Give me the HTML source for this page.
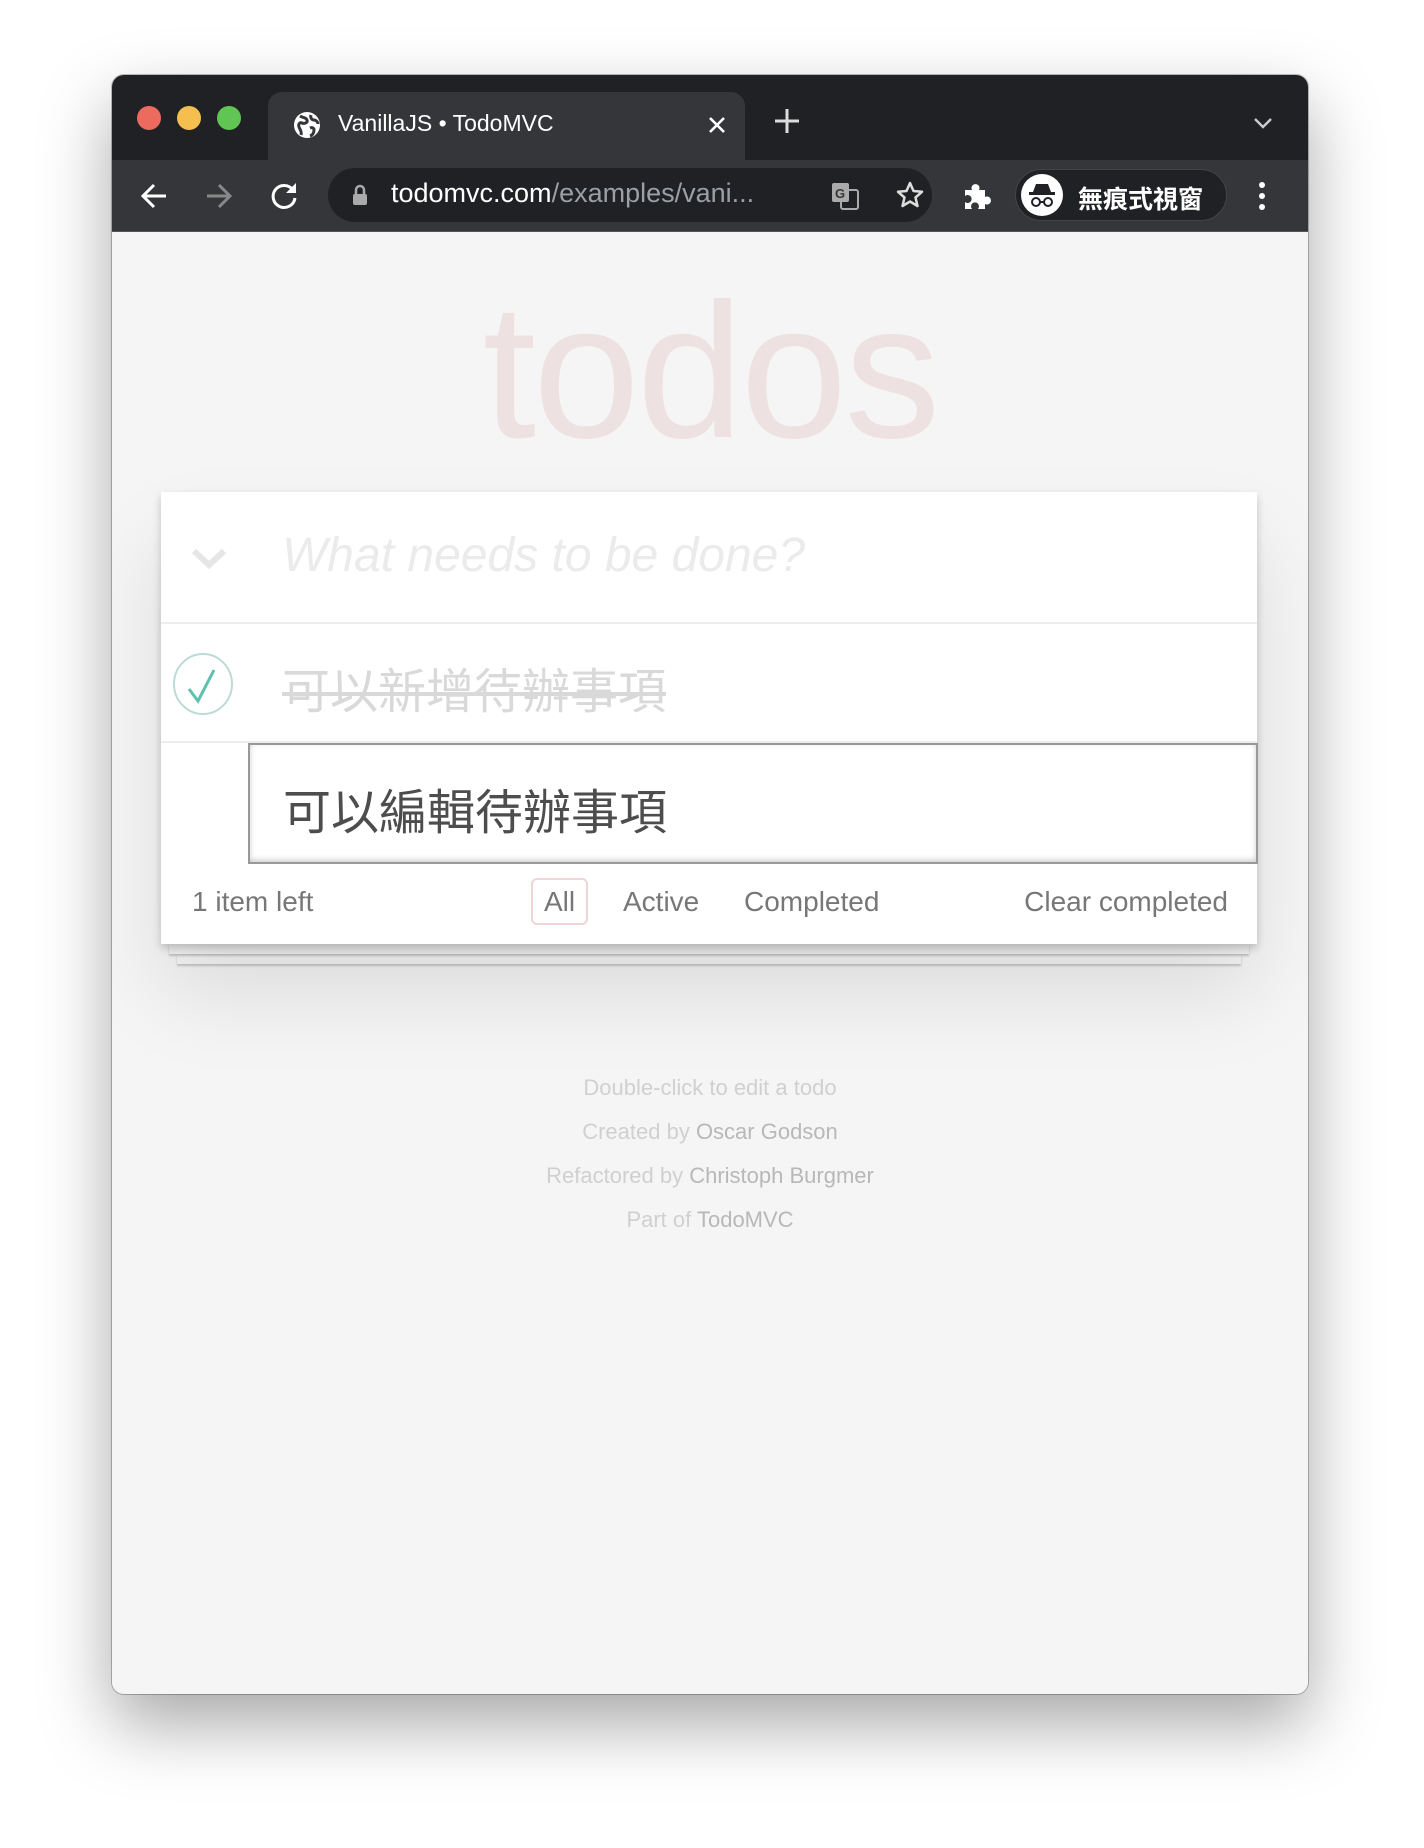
<!DOCTYPE html>
<html><head><meta charset="utf-8">
<style>
*{margin:0;padding:0;box-sizing:border-box}
body{width:1424px;height:1848px;background:#fff;font-family:"Liberation Sans","Noto Sans CJK TC",sans-serif;position:relative;overflow:hidden}
.win{position:absolute;left:112px;top:75px;width:1196px;height:1619px;border-radius:12px;overflow:hidden;background:#f5f5f5;box-shadow:0 30px 70px rgba(0,0,0,.35),0 0 0 1px rgba(0,0,0,.25)}
.tabbar{position:absolute;left:0;top:0;width:100%;height:85px;background:#202124}
.dot{position:absolute;top:31px;width:24px;height:24px;border-radius:50%}
.tab{position:absolute;left:156px;top:17px;width:477px;height:70px;background:#35363a;border-radius:14px 14px 0 0}
.toolbar{position:absolute;left:0;top:85px;width:100%;height:72px;background:#35363a;border-bottom:1px solid #555}
.omni{position:absolute;left:216px;top:8px;width:604px;height:54px;border-radius:27px;background:#202124}
.pill{position:absolute;left:903px;top:9px;width:212px;height:52px;border-radius:26px;background:#202124;border:1px solid #444}
.white{color:#fff}
svg{position:absolute}
.content{position:absolute;left:0;top:158px;width:100%;bottom:0;background:#f5f5f5}
h1{position:absolute;left:0;width:100%;top:38px;text-align:center;font-size:192px;font-weight:normal;color:rgba(175,47,47,.1);letter-spacing:-3px;line-height:200px}
.card{position:absolute;left:49px;top:259px;width:1096px;height:452px;background:#fff;box-shadow:0 4px 8px rgba(0,0,0,.2),0 50px 80px rgba(0,0,0,.1)}
.l1{position:absolute;left:57px;top:711px;width:1080px;height:10px;background:#f6f6f6;box-shadow:0 2px 2px rgba(0,0,0,.2)}
.l2{position:absolute;left:65px;top:721px;width:1064px;height:10px;background:#f6f6f6;box-shadow:0 2px 2px rgba(0,0,0,.2)}
.row{position:absolute;left:0;width:100%}
.info{position:absolute;left:0;width:100%;text-align:center;font-size:22px;color:#d0d0d0}
.info b{font-weight:normal;color:#b8b8b8}
</style></head><body>
<div class="win">
 <div class="tabbar">
  <div class="dot" style="left:25px;background:#ed6a5e"></div>
  <div class="dot" style="left:65px;background:#f5bf4f"></div>
  <div class="dot" style="left:105px;background:#61c554"></div>
  <div class="tab">
   <svg style="left:24px;top:18px" width="30" height="30" viewBox="0 0 30 30"><circle cx="15" cy="15" r="13" fill="#fff"/><path d="M8 6c3 2 6 1 7 4s-3 4-5 3-4 1-3 4 3 4 2 8M19 5c-1 3 1 5 3 5s4 2 4 4M18 18c2-1 4 0 4 2s-1 5-4 6" stroke="#35363a" stroke-width="3" fill="none"/></svg>
   <div class="white" style="position:absolute;left:70px;top:18px;font-size:23px">VanillaJS • TodoMVC</div>
   <svg style="left:440px;top:24px" width="18" height="18" viewBox="0 0 18 18"><path d="M2 2L16 16M16 2L2 16" stroke="#fff" stroke-width="2.6"/></svg>
  </div>
  <svg style="left:662px;top:33px" width="26" height="26" viewBox="0 0 26 26"><path d="M13 1V25M1 13H25" stroke="#ddd" stroke-width="3"/></svg>
  <svg style="left:1141px;top:42px" width="20" height="12" viewBox="0 0 20 12"><path d="M2 2L10 10L18 2" stroke="#ccc" stroke-width="2.4" fill="none"/></svg>
 </div>
 <div class="toolbar">
  <svg style="left:28px;top:22px" width="28" height="28" viewBox="0 0 28 28"><path d="M26 14H4M14 3L3 14L14 25" stroke="#fff" stroke-width="3" fill="none"/></svg>
  <svg style="left:93px;top:22px" width="28" height="28" viewBox="0 0 28 28"><path d="M2 14H24M14 3L25 14L14 25" stroke="#888" stroke-width="3" fill="none"/></svg>
  <svg style="left:157px;top:21px" width="30" height="30" viewBox="0 0 30 30"><path d="M24 9A11 11 0 1 0 26 17" stroke="#fff" stroke-width="3" fill="none"/><path d="M27 2V12H17Z" fill="#fff"/></svg>
  <div class="omni">
   <svg style="left:24px;top:16px" width="16" height="22" viewBox="0 0 16 22"><path d="M4 10V6a4 4 0 0 1 8 0v4" stroke="#aaa" stroke-width="2.5" fill="none"/><rect x="1" y="10" width="14" height="11" rx="2" fill="#aaa"/></svg>
   <div style="position:absolute;left:63px;top:10px;font-size:27px;color:#fff;white-space:nowrap">todomvc.com<span style="color:#9aa0a6">/examples/vani...</span></div>
   <svg style="left:502px;top:13px" width="30" height="30" viewBox="0 0 30 30"><rect x="2" y="2" width="17" height="19" rx="2" fill="#aaa"/><rect x="11" y="9" width="17" height="19" rx="2" fill="none" stroke="#aaa" stroke-width="2"/><text x="5" y="17" font-size="13" font-weight="bold" fill="#35363a" font-family="Liberation Sans">G</text></svg>
   <svg style="left:567px;top:12px" width="30" height="30" viewBox="0 0 30 30"><path d="M15 3l3.5 8 8.5.8-6.5 5.7 2 8.5L15 21.5 7.5 26l2-8.5L3 11.8l8.5-.8z" stroke="#ddd" stroke-width="2.5" fill="none" stroke-linejoin="round"/></svg>
  </div>
  <svg style="left:848px;top:20px" width="32" height="32" viewBox="0 0 32 32"><path d="M5 10h7a4 4 0 1 1 7 0h6v7a4 4 0 1 1 0 7v5H18a4 4 0 1 0-6 0H5v-7a4 4 0 1 0 0-6z" fill="#fff"/></svg>
  <div class="pill">
   <svg style="left:4px;top:3px" width="44" height="44" viewBox="0 0 44 44"><circle cx="22" cy="22" r="21" fill="#fff"/><path d="M13 19h18l-3-8h-12z" fill="#202124"/><rect x="9" y="19" width="26" height="3" fill="#202124"/><circle cx="16" cy="29" r="4" stroke="#202124" stroke-width="2" fill="none"/><circle cx="28" cy="29" r="4" stroke="#202124" stroke-width="2" fill="none"/><path d="M20 29h4" stroke="#202124" stroke-width="2"/></svg>
   <div class="white" style="position:absolute;left:62px;top:10px;font-size:25px;font-weight:bold">無痕式視窗</div>
  </div>
  <svg style="left:1145px;top:20px" width="10" height="32" viewBox="0 0 10 32"><circle cx="5" cy="5" r="3" fill="#fff"/><circle cx="5" cy="16" r="3" fill="#fff"/><circle cx="5" cy="27" r="3" fill="#fff"/></svg>
 </div>
 <div class="content">
  <h1>todos</h1>
  <div class="l2"></div><div class="l1"></div>
  <div class="card">
   <div class="row" style="top:0;height:132px;border-bottom:2px solid #ededed">
    <svg style="left:30px;top:56px" width="36" height="22" viewBox="0 0 36 22"><path d="M3 3L18 17L33 3" stroke="#e6e6e6" stroke-width="6" fill="none"/></svg>
    <div style="position:absolute;left:121px;top:36px;font-size:48px;font-style:italic;color:#ebebeb">What needs to be done?</div>
   </div>
   <div class="row" style="top:132px;height:119px;border-bottom:2px solid #ededed">
    <svg style="left:12px;top:27px" width="64" height="66" viewBox="0 0 64 66"><ellipse cx="30" cy="33" rx="29" ry="30" stroke="#bddad5" stroke-width="2" fill="none"/><path d="M16 38L25 50L41 19" stroke="#5dc2af" stroke-width="3" fill="none"/></svg>
    <div style="position:absolute;left:121px;top:28px;font-size:48px;color:#d9d9d9;text-decoration:line-through;text-decoration-color:#d9d9d9">可以新增待辦事項</div>
   </div>
   <div style="position:absolute;left:87px;top:251px;width:1010px;height:121px;border:2px solid #999;background:#fff;box-shadow:inset 0 -2px 6px rgba(0,0,0,.2)">
    <div style="position:absolute;left:33px;top:28px;font-size:48px;color:#4d4d4d">可以編輯待辦事項</div>
   </div>
   <div class="row" style="top:372px;height:80px">
    <div style="position:absolute;left:31px;top:22px;font-size:28px;color:#777">1 item left</div>
    <div style="position:absolute;left:370px;top:14px;width:57px;height:47px;border:2px solid rgba(175,47,47,.2);border-radius:6px;font-size:28px;color:#777;text-align:center;line-height:43px">All</div>
    <div style="position:absolute;left:462px;top:22px;font-size:28px;color:#777">Active</div>
    <div style="position:absolute;left:583px;top:22px;font-size:28px;color:#777">Completed</div>
    <div style="position:absolute;right:29px;top:22px;font-size:28px;color:#777">Clear completed</div>
   </div>
  </div>
  <div class="info" style="top:842px">Double-click to edit a todo</div>
  <div class="info" style="top:886px">Created by <b>Oscar Godson</b></div>
  <div class="info" style="top:930px">Refactored by <b>Christoph Burgmer</b></div>
  <div class="info" style="top:974px">Part of <b>TodoMVC</b></div>
 </div>
</div>
</body></html>
